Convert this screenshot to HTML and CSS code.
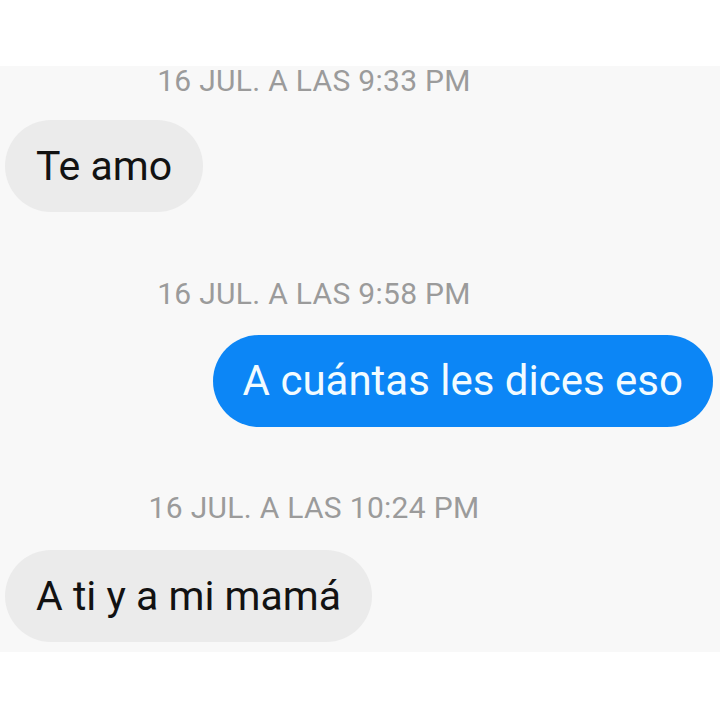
FILE: index.html
```html
<!DOCTYPE html>
<html lang="es">
<head>
<meta charset="utf-8">
<title>Chat</title>
<link rel="stylesheet" href="styles.css">
</head>
<body>
<div class="top"></div>
<main class="chat">
  <div class="stamp stamp-1">16 JUL. A LAS 9:33 PM</div>
  <div class="row in r1"><div class="bubble gray">Te amo</div></div>
  <div class="stamp stamp-2">16 JUL. A LAS 9:58 PM</div>
  <div class="row out r2"><div class="bubble blue">A cuántas les dices eso</div></div>
  <div class="stamp stamp-3">16 JUL. A LAS 10:24 PM</div>
  <div class="row in r3"><div class="bubble gray">A ti y a mi mamá</div></div>
</main>
</body>
</html>
```

FILE: styles.css
```css
html, body {
  margin: 0;
  padding: 0;
  background: #ffffff;
  width: 720px;
  height: 720px;
  overflow: hidden;
}
body {
  font-family: Roboto, "Liberation Sans", sans-serif;
}
.top {
  height: 66px;
}
.chat {
  background: #f8f8f8;
  padding: 0 7px 10px 5px;
  display: flex;
  flex-direction: column;
}
.stamp {
  width: 618px;
  text-align: center;
  font-size: 30px;
  line-height: 29px;
  letter-spacing: 0.3px;
  color: #9b9b9b;
}
.row {
  display: flex;
}
.row.out {
  justify-content: flex-end;
}
.r1 { margin-top: 25px; }
.stamp-2 { margin-top: 67px; }
.r2 { margin-top: 27px; }
.stamp-3 { margin-top: 66px; }
.r3 { margin-top: 28px; }
.bubble {
  height: 92px;
  border-radius: 46px;
  padding: 0 31px;
  display: flex;
  align-items: center;
  line-height: 1;
  white-space: nowrap;
}
.gray {
  background: #ebebeb;
  color: #121212;
  font-size: 41px;
}
.blue {
  background: #0c86f6;
  color: #f2fbff;
  font-size: 42px;
  padding: 0 30px;
}
```
